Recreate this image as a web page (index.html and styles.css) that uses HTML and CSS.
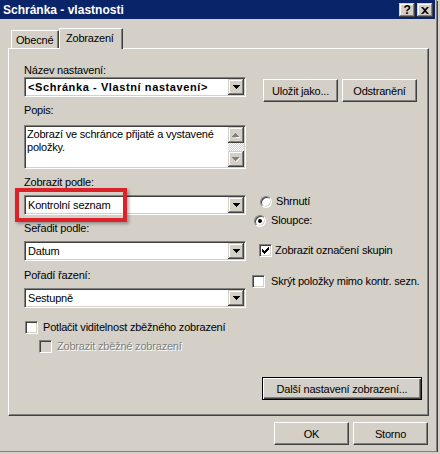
FILE: index.html
```html
<!DOCTYPE html>
<html lang="cs">
<head>
  <meta charset="UTF-8">
  <title>Schránka - vlastnosti</title>
  <link rel="stylesheet" href="styles.css">
</head>
<body>
  <div class="window">
    <div class="titlebar">
      <span class="title">Schránka - vlastnosti</span>
      <div class="caption-buttons">
        <span class="cap-btn help">?</span>
        <span class="cap-btn close">
          <svg width="8" height="7" viewBox="0 0 8 7"><path d="M0 0h2l2 2 2-2h2L5 3.5 8 7H6L4 5 2 7H0l3-3.5z"/></svg>
        </span>
      </div>
    </div>

    <div class="client">
      <div class="tabs">
        <div class="tab">Obecné</div>
        <div class="tab active">Zobrazení</div>
      </div>

      <div class="panel">
        <div class="panel-body">
          <div class="col-left">
            <div class="label">Název nastavení:</div>
            <div class="field combo">
              <span class="combo-text bold">&lt;Schránka - Vlastní nastavení&gt;</span>
              <span class="drop-btn"><svg width="7" height="4" viewBox="0 0 7 4"><path d="M0 0h7v1h-1v1h-1v1h-1v1h-1v-1h-1v-1h-1v-1h-1z"/></svg></span>
            </div>

            <div class="label mt7">Popis:</div>
            <div class="field memo mt8">
              <div class="memo-text">Zobrazí ve schránce přijaté a vystavené položky.</div>
              <div class="vscroll">
                <span class="scroll-btn"><svg width="8" height="5" viewBox="0 0 8 5"><path fill="#fff" d="M4 1h1v1h1v1h1v1h1v1h-4z"/><path fill="#808080" d="M3 0h1v1h1v1h1v1h1v1h-7v-1h1v-1h1v-1h1z"/></svg></span>
                <span class="scroll-track"></span>
                <span class="scroll-btn"><svg width="8" height="5" viewBox="0 0 8 5"><path fill="#fff" d="M7 1h1v1h-1v1h-1v1h-1v1h-1v-1h1v-1h1v-1h1z"/><path fill="#808080" d="M0 0h7v1h-1v1h-1v1h-1v1h-1v-1h-1v-1h-1v-1h-1z"/></svg></span>
              </div>
            </div>

            <div class="label mt7">Zobrazit podle:</div>
            <div class="field combo mt6">
              <span class="combo-text">Kontrolní seznam</span>
              <span class="drop-btn"><svg width="7" height="4" viewBox="0 0 7 4"><path d="M0 0h7v1h-1v1h-1v1h-1v1h-1v-1h-1v-1h-1v-1h-1z"/></svg></span>
            </div>

            <div class="label mt7">Seřadit podle:</div>
            <div class="field combo mt6">
              <span class="combo-text">Datum</span>
              <span class="drop-btn"><svg width="7" height="4" viewBox="0 0 7 4"><path d="M0 0h7v1h-1v1h-1v1h-1v1h-1v-1h-1v-1h-1v-1h-1z"/></svg></span>
            </div>

            <div class="label mt8">Pořadí řazení:</div>
            <div class="field combo mt6">
              <span class="combo-text">Sestupně</span>
              <span class="drop-btn"><svg width="7" height="4" viewBox="0 0 7 4"><path d="M0 0h7v1h-1v1h-1v1h-1v1h-1v-1h-1v-1h-1v-1h-1z"/></svg></span>
            </div>

            <div class="option potlacit">
              <span class="field checkbox"></span>
              <span>Potlačit viditelnost zběžného zobrazení</span>
            </div>
            <div class="option disabled sub">
              <span class="field checkbox off"></span>
              <span>Zobrazit zběžné zobrazení</span>
            </div>
          </div>

          <div class="col-right">
            <div class="button-row">
              <button class="btn">Uložit jako...</button>
              <button class="btn">Odstranění</button>
            </div>

            <div class="option shrnuti">
              <span class="field radio"></span>
              <span>Shrnutí</span>
            </div>
            <div class="option sloupce">
              <span class="field radio checked"></span>
              <span>Sloupce:</span>
            </div>
            <div class="option skupiny">
              <span class="field checkbox">
                <svg width="7" height="7" viewBox="0 0 7 7"><path d="M6 0h1v1h-1zM5 1h2v1h-2zM0 2h1v1h-1zM4 2h3v1h-3zM0 3h2v1h-2zM3 3h3v1h-3zM0 4h5v1h-5zM1 5h3v1h-3zM2 6h1v1h-1z"/></svg>
              </span>
              <span>Zobrazit označení skupin</span>
            </div>
            <div class="option skryt">
              <span class="field checkbox"></span>
              <span>Skrýt položky mimo kontr. sezn.</span>
            </div>
          </div>
        </div>

        <div class="panel-footer">
          <button class="btn default wide">Další nastavení zobrazení...</button>
        </div>
      </div>

      <div class="dialog-buttons">
        <button class="btn">OK</button>
        <button class="btn">Storno</button>
      </div>
    </div>

    <!-- zvýraznění pole Zobrazit podle -->
    <div class="highlight"></div>
  </div>
</body>
</html>
```

FILE: styles.css
```css
* {
  box-sizing: border-box;
}

body {
  margin: 0;
  background-color: #d4d0c8;
  font-family: "Liberation Sans", Arial, sans-serif;
  font-size: 11px;
  letter-spacing: -0.2px;
  color: #000;
}

.window {
  position: relative;
  width: 437px;
  height: 452px;
  padding: 0 1px 1px 0;
  background-color: #d4d0c8;
  border-right: 1px solid #808080;
  border-bottom: 1px solid #808080;
  box-shadow: 1px 1px 0 #404040;
}

/* title bar */

.titlebar {
  display: flex;
  align-items: flex-start;
  height: 19px;
  padding: 0 2px 0 3px;
  background-color: #0a246a;
  color: #fff;
}

.title {
  flex: 1;
  padding-top: 2px;
  font-size: 12px;
  font-weight: bold;
  line-height: 17px;
  letter-spacing: 0;
}

.caption-buttons {
  display: flex;
  gap: 2px;
  margin-top: 3px;
}

.cap-btn {
  display: flex;
  align-items: center;
  justify-content: center;
  width: 16px;
  height: 14px;
  background-color: #d4d0c8;
  color: #000;
  box-shadow: inset -1px -1px #404040, inset 1px 1px #d4d0c8, inset -2px -2px #808080, inset 2px 2px #fff;
}

.cap-btn.help {
  font-size: 12px;
  font-weight: bold;
  line-height: 12px;
}

/* client area */

.client {
  padding: 9px 6px 0 8px;
}

.tabs {
  display: flex;
  align-items: flex-end;
  height: 20px;
  margin-left: 3px;
}

.tab {
  height: 18px;
  width: 48px;
  padding: 2px 0 0 4px;
  line-height: 15px;
  border-top: 1px solid #fff;
  border-left: 1px solid #fff;
  border-right: 1px solid #404040;
  box-shadow: inset -1px 0 #808080;
}

.tab.active {
  position: relative;
  z-index: 1;
  width: 64px;
  height: 21px;
  margin-bottom: -1px;
  padding-left: 6px;
  background-color: #d4d0c8;
}

.panel {
  border-top: 1px solid #fff;
  border-left: 1px solid #fff;
  border-right: 1px solid #404040;
  border-bottom: 1px solid #404040;
  box-shadow: inset -1px -1px #808080;
  padding: 15px 6px 15px 15px;
}

.panel-body {
  display: grid;
  grid-template-columns: 222px 1fr;
  column-gap: 6px;
}

.col-left, .col-right {
  display: flex;
  flex-direction: column;
  align-items: flex-start;
}

.col-left {
  align-items: stretch;
}

.label {
  line-height: 13px;
}

.mt6 { margin-top: 6px; }
.mt7 { margin-top: 7px; }
.mt8 { margin-top: 8px; }

.bold {
  font-weight: bold;
  letter-spacing: 0.6px;
}

/* sunken controls */

.field {
  background-color: #fff;
  border: 1px solid;
  border-color: #808080 #fff #fff #808080;
  box-shadow: inset 1px 1px #404040, inset -1px -1px #d4d0c8;
}

.combo {
  display: flex;
  height: 20px;
  padding: 1px;
}

.combo-text {
  flex: 1;
  padding-left: 2px;
  line-height: 16px;
  white-space: nowrap;
}

.drop-btn, .scroll-btn {
  display: flex;
  align-items: center;
  justify-content: center;
  width: 16px;
  height: 16px;
  background-color: #d4d0c8;
  box-shadow: inset -1px -1px #404040, inset 1px 1px #d4d0c8, inset -2px -2px #808080, inset 2px 2px #fff;
}

.memo {
  display: flex;
  height: 44px;
  padding: 1px;
}

.memo-text {
  flex: 1;
  padding: 1px 0 0 1px;
  line-height: 13px;
}

.vscroll {
  display: flex;
  flex-direction: column;
  width: 16px;
}

.scroll-track {
  flex: 1;
  background: repeating-conic-gradient(#fff 0 25%, #d4d0c8 0 50%) 0 0 / 2px 2px;
}

/* check boxes and radios */

.option {
  display: flex;
  align-items: center;
  gap: 5px;
  height: 13px;
  line-height: 13px;
  white-space: nowrap;
}

.checkbox {
  display: flex;
  align-items: center;
  justify-content: center;
  width: 13px;
  height: 13px;
}

.checkbox.off {
  background-color: #d4d0c8;
}

.radio {
  position: relative;
  width: 12px;
  height: 12px;
  border-radius: 50%;
}

.radio.checked::after {
  content: "";
  position: absolute;
  left: 3px;
  top: 3px;
  width: 4px;
  height: 4px;
  border-radius: 50%;
  background-color: #000;
}

.potlacit {
  margin-top: 13px;
  margin-left: 1px;
}

.sub {
  margin-top: 6px;
  margin-left: 15px;
}

.disabled {
  color: #808080;
  text-shadow: 1px 1px 0 #fff;
}

.shrnuti {
  margin-top: 93px;
  margin-left: 8px;
  gap: 4px;
}

.sloupce {
  margin-top: 6px;
  margin-left: 2px;
}

.skupiny {
  margin-top: 17px;
  margin-left: 7px;
  gap: 3px;
}

.skryt {
  margin-top: 18px;
  gap: 6px;
}

/* push buttons */

.btn {
  width: 75px;
  height: 23px;
  padding: 0;
  font-family: inherit;
  font-size: 11px;
  letter-spacing: inherit;
  color: #000;
  background-color: #d4d0c8;
  border: 1px solid;
  border-color: #fff #404040 #404040 #fff;
  box-shadow: inset -1px -1px #808080;
  border-radius: 0;
}

.btn.default {
  border-color: #000;
  box-shadow: inset 1px 1px #fff, inset -1px -1px #404040, inset -2px -2px #808080;
}

.btn.wide {
  width: 160px;
}

.button-row {
  display: flex;
  gap: 4px;
  margin-top: 15px;
  margin-left: 11px;
}

.panel-footer {
  display: flex;
  justify-content: flex-end;
  margin-top: 24px;
}

.dialog-buttons {
  display: flex;
  justify-content: flex-end;
  gap: 4px;
  margin-top: 6px;
  padding-right: 1px;
}

/* red frame drawn over the dialog */

.highlight {
  position: absolute;
  left: 15px;
  top: 188px;
  width: 112px;
  height: 34px;
  border: 4px solid #dc2228;
  box-shadow: 2px 2px 3px rgba(0, 0, 0, 0.3);
}
```
